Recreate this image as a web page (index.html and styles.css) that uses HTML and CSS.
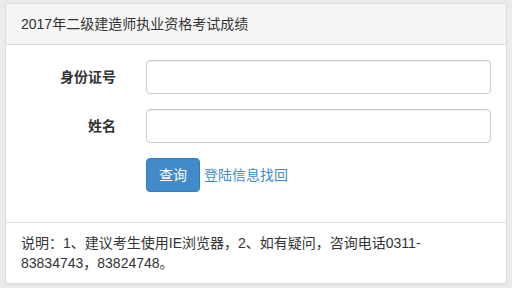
FILE: index.html
```html
<!DOCTYPE html>
<html lang="zh-CN">
<head>
    <meta charset="UTF-8">
    <meta name="viewport" content="width=device-width, initial-scale=1.0">
    <title>2017年二级建造师执业资格考试成绩</title>
    <link rel="stylesheet" href="styles.css">
</head>
<body>
    <div class="panel">
        <div class="panelHeading">2017年二级建造师执业资格考试成绩</div>
        <div class="panelBody">
            <form class="queryForm" id="queryForm">
                <div class="formGroup">
                    <label for="idCard" class="formLabel">身份证号</label>
                    <div class="formField">
                        <input type="text" name="idCard" id="idCard" class="formInput">
                    </div>
                </div>
                <div class="formGroup">
                    <label for="name" class="formLabel">姓名</label>
                    <div class="formField">
                        <input type="text" name="name" id="name" class="formInput">
                    </div>
                </div>
                <div class="formGroup">
                    <div class="formLabel"></div>
                    <div class="formField">
                        <button type="submit" class="formSubmit">查询</button>
                        <a href="#" class="findLink">登陆信息找回</a>
                    </div>
                </div>
            </form>
        </div>
        <div class="panelFooter">
            说明：1、建议考生使用IE浏览器，2、如有疑问，咨询电话0311-83834743，83824748。
        </div>
    </div>
</body>
</html>
```

FILE: styles.css
```css
:root {
    --primary-color: #428bca;
    --border-color: #dddddd;
    --text-color: #333333;
}
body {
    margin: 0;
    padding: 3px 5px 5px 5px;
    background-color: #ebebeb;
    color: var(--text-color);
    font-size: 14px;
    line-height: 20px;
    font-family: 'Liberation Sans', 'Noto Sans CJK SC', sans-serif;
}
.panel {
    background: #ffffff;
    border: 1px solid var(--border-color);
    border-radius: 4px;
    box-shadow: 0 1px 1px rgba(0, 0, 0, 0.05);
}
.panelHeading {
    background: #f5f5f5;
    padding: 10px 15px;
    border-bottom: 1px solid var(--border-color);
    border-top-left-radius: 3px;
    border-top-right-radius: 3px;
}
.panelBody {
    padding: 15px;
}
.formGroup {
    display: flex;
    margin: 0 -15px 15px -15px;
}
.formLabel {
    box-sizing: border-box;
    width: 25%;
    padding: 7px 15px 0 15px;
    text-align: right;
    font-weight: bold;
}
.formField {
    flex: 1;
    padding: 0 15px;
    display: flex;
    align-items: center;
    gap: 4px;
}
.formInput {
    box-sizing: border-box;
    width: 100%;
    height: 34px;
    padding: 6px 12px;
    font-size: 14px;
    border: 1px solid #cccccc;
    border-radius: 4px;
    box-shadow: inset 0 1px 1px rgba(0, 0, 0, 0.075);
    outline: none;
}
.formSubmit {
    height: 34px;
    padding: 6px 12px;
    background: var(--primary-color);
    border: 1px solid #357ebd;
    border-radius: 4px;
    color: white;
    font-size: 14px;
    line-height: 20px;
    font-family: inherit;
}
.findLink {
    color: var(--primary-color);
    text-decoration: none;
}
.panelFooter {
    padding: 10px 15px;
    border-top: 1px solid var(--border-color);
}
```
